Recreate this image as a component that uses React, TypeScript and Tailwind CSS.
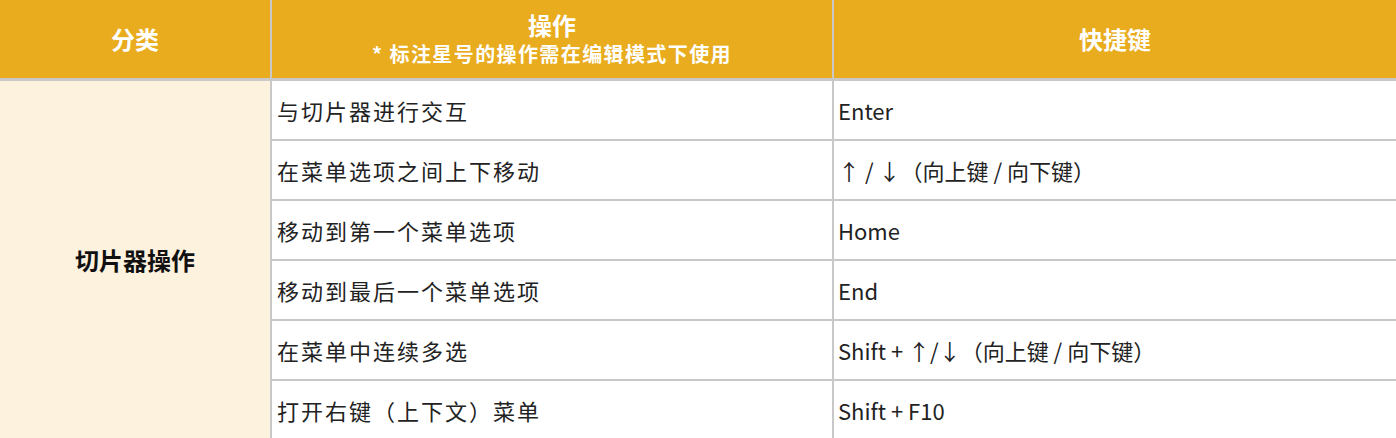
import React from "react";

interface ShortcutRow {
  action: string;
  keys: string;
}

const rows: ShortcutRow[] = [
  { action: "与切片器进行交互", keys: "Enter" },
  { action: "在菜单选项之间上下移动", keys: "↑ / ↓（向上键 / 向下键）" },
  { action: "移动到第一个菜单选项", keys: "Home" },
  { action: "移动到最后一个菜单选项", keys: "End" },
  { action: "在菜单中连续多选", keys: "Shift + ↑/↓（向上键 / 向下键）" },
  { action: "打开右键（上下文）菜单", keys: "Shift + F10" },
];

const font = "font-['Noto_Sans_CJK_SC','Noto_Sans',sans-serif]";

export default function App() {
  return (
    <div className={`w-[1396px] bg-white ${font}`}>
      <div className="flex flex-col gap-[3px] bg-[#c8c8c8]">
        {/* Header */}
        <div className="grid h-[78px] grid-cols-[270px_560px_1fr] gap-x-[2px]">
          <div className="flex items-center justify-center bg-[#e8ac1e] text-[24px] font-bold text-white">
            分类
          </div>
          <div className="flex flex-col items-center justify-center bg-[#e8ac1e] font-bold text-white">
            <span className="text-[24px] leading-[30px]">操作</span>
            <span className="text-[20px] leading-[28px] tracking-[1.4px]">
              * 标注星号的操作需在编辑模式下使用
            </span>
          </div>
          <div className="flex items-center justify-center bg-[#e8ac1e] text-[24px] font-bold text-white">
            快捷键
          </div>
        </div>

        {/* Body */}
        <div className="grid grid-cols-[270px_560px_1fr] grid-rows-[repeat(6,58px)] gap-[2px]">
          <div className="row-span-6 flex items-center justify-center bg-[#fdf2dd] text-[24px] font-bold text-[#111]">
            切片器操作
          </div>
          {rows.map((row) => (
            <React.Fragment key={row.action}>
              <div className="flex items-center bg-white pl-[5px] text-[22px] tracking-[2px] text-[#222]">
                {row.action}
              </div>
              <div className="flex items-center bg-white pl-[4px] text-[22px] text-[#222]">
                {row.keys}
              </div>
            </React.Fragment>
          ))}
        </div>
      </div>
    </div>
  );
}
